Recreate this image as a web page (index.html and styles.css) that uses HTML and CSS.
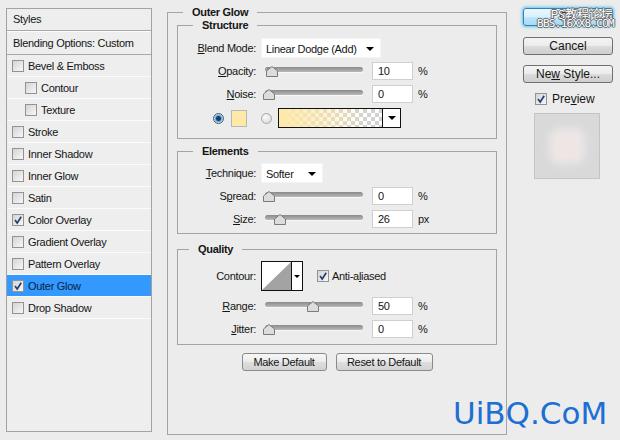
FILE: index.html
```html
<!DOCTYPE html>
<html>
<head>
<meta charset="utf-8">
<link rel="stylesheet" href="styles.css">
</head>
<body>
<div class="dialog">
  <aside class="styles-panel">
    <div class="sp-header">Styles</div>
    <div class="sp-blend">Blending Options: Custom</div>
    <ul class="sp-list">
      <li><span class="cb"></span>Bevel &amp; Emboss</li>
      <li class="sub"><span class="cb"></span>Contour</li>
      <li class="sub"><span class="cb"></span>Texture</li>
      <li><span class="cb"></span>Stroke</li>
      <li><span class="cb"></span>Inner Shadow</li>
      <li><span class="cb"></span>Inner Glow</li>
      <li><span class="cb"></span>Satin</li>
      <li><span class="cb"><svg viewBox="0 0 10 10" width="10" height="10"><path d="M2 5 L4.2 8 L8.2 1.8" fill="none" stroke="#24406e" stroke-width="1.7"/></svg></span>Color Overlay</li>
      <li><span class="cb"></span>Gradient Overlay</li>
      <li><span class="cb"></span>Pattern Overlay</li>
      <li class="active"><span class="cb"><svg viewBox="0 0 10 10" width="10" height="10"><path d="M2 5 L4.2 8 L8.2 1.8" fill="none" stroke="#24406e" stroke-width="1.7"/></svg></span>Outer Glow</li>
      <li><span class="cb"></span>Drop Shadow</li>
    </ul>
  </aside>

  <fieldset class="main">
    <legend>Outer Glow</legend>

    <fieldset class="group structure">
      <legend>Structure</legend>
      <div class="row first">
        <span class="lbl"><u>B</u>lend Mode:</span>
        <div class="select blend">Linear Dodge (Add)<span class="arrow"></span></div>
      </div>
      <div class="row">
        <span class="lbl"><u>O</u>pacity:</span>
        <div class="slider"><div class="track"></div><svg class="thumb" style="left:5px" viewBox="0 0 12 11" width="12" height="11"><path d="M6 0.5 L11.5 5 L11.5 10.5 L0.5 10.5 L0.5 5 Z" fill="#dcdcdc" stroke="#7a7a7a"/></svg></div>
        <div class="num">10</div><span class="unit">%</span>
      </div>
      <div class="row">
        <span class="lbl"><u>N</u>oise:</span>
        <div class="slider"><div class="track"></div><svg class="thumb" style="left:2px" viewBox="0 0 12 11" width="12" height="11"><path d="M6 0.5 L11.5 5 L11.5 10.5 L0.5 10.5 L0.5 5 Z" fill="#dcdcdc" stroke="#7a7a7a"/></svg></div>
        <div class="num">0</div><span class="unit">%</span>
      </div>
      <div class="row colors">
        <span class="radio on"></span>
        <span class="swatch"></span>
        <span class="radio"></span>
        <div class="gradient"><span class="grad-fill"></span><span class="grad-arrow"><span class="arrow"></span></span></div>
      </div>
    </fieldset>

    <fieldset class="group elements">
      <legend>Elements</legend>
      <div class="row first">
        <span class="lbl"><u>T</u>echnique:</span>
        <div class="select tech">Softer<span class="arrow"></span></div>
      </div>
      <div class="row">
        <span class="lbl">S<u>p</u>read:</span>
        <div class="slider"><div class="track"></div><svg class="thumb" style="left:2px" viewBox="0 0 12 11" width="12" height="11"><path d="M6 0.5 L11.5 5 L11.5 10.5 L0.5 10.5 L0.5 5 Z" fill="#dcdcdc" stroke="#7a7a7a"/></svg></div>
        <div class="num">0</div><span class="unit">%</span>
      </div>
      <div class="row">
        <span class="lbl"><u>S</u>ize:</span>
        <div class="slider"><div class="track"></div><svg class="thumb" style="left:13px" viewBox="0 0 12 11" width="12" height="11"><path d="M6 0.5 L11.5 5 L11.5 10.5 L0.5 10.5 L0.5 5 Z" fill="#dcdcdc" stroke="#7a7a7a"/></svg></div>
        <div class="num">26</div><span class="unit">px</span>
      </div>
    </fieldset>

    <fieldset class="group quality">
      <legend>Quality</legend>
      <div class="row contour-row">
        <span class="lbl">Contour:</span>
        <div class="contour">
          <svg class="curve" viewBox="0 0 29 28" width="29" height="28"><rect width="29" height="28" fill="#fff"/><polygon points="0,28 29,0 29,28" fill="#a3a3a3"/></svg>
          <span class="c-arrow"><span class="arrow small"></span></span>
        </div>
        <span class="cb aa"><svg viewBox="0 0 10 10" width="10" height="10"><path d="M2 5 L4.2 8 L8.2 1.8" fill="none" stroke="#24406e" stroke-width="1.7"/></svg></span>
        <span class="aa-label">Anti-a<u>l</u>iased</span>
      </div>
      <div class="row">
        <span class="lbl"><u>R</u>ange:</span>
        <div class="slider"><div class="track"></div><svg class="thumb" style="left:46px" viewBox="0 0 12 11" width="12" height="11"><path d="M6 0.5 L11.5 5 L11.5 10.5 L0.5 10.5 L0.5 5 Z" fill="#dcdcdc" stroke="#7a7a7a"/></svg></div>
        <div class="num">50</div><span class="unit">%</span>
      </div>
      <div class="row">
        <span class="lbl"><u>J</u>itter:</span>
        <div class="slider"><div class="track"></div><svg class="thumb" style="left:2px" viewBox="0 0 12 11" width="12" height="11"><path d="M6 0.5 L11.5 5 L11.5 10.5 L0.5 10.5 L0.5 5 Z" fill="#dcdcdc" stroke="#7a7a7a"/></svg></div>
        <div class="num">0</div><span class="unit">%</span>
      </div>
    </fieldset>

    <div class="defaults">
      <span class="pbtn make">Make Default</span>
      <span class="pbtn reset">Reset to Default</span>
    </div>
  </fieldset>

  <div class="side">
    <div class="btn ok">OK
      <span class="wm1">PS教程论坛</span>
      <span class="wm2">BBS.16XX8.COM</span>
    </div>
    <div class="btn cancel">Cancel</div>
    <div class="btn newstyle">Ne<u>w</u> Style...</div>
    <div class="preview-row"><span class="cb"><svg viewBox="0 0 10 10" width="10" height="10"><path d="M2 5 L4.2 8 L8.2 1.8" fill="none" stroke="#24406e" stroke-width="1.7"/></svg></span>Pre<u>v</u>iew</div>
    <div class="preview"><div class="glow"></div></div>
  </div>
</div>
<div class="watermark">UiBQ.CoM</div>
</body>
</html>
```
FILE: styles.css
```css
* { box-sizing: border-box; }
html, body { margin: 0; padding: 0; }
body {
  width: 620px;
  height: 440px;
  background: #ececec;
  font-family: "Liberation Sans", Arial, sans-serif;
  font-size: 11px;
  letter-spacing: -0.3px;
  color: #151515;
  position: relative;
  overflow: hidden;
}
u { text-decoration: underline; text-underline-offset: 1px; }

.dialog { display: flex; align-items: flex-start; }

/* ---------- styles list ---------- */
.styles-panel {
  margin: 8px 0 0 6px;
  width: 146px;
  height: 424px;
  border: 1px solid #a2a2a2;
  background: #eeeeee;
}
.sp-header {
  height: 22px;
  line-height: 21px;
  padding-left: 6px;
  border-bottom: 1px solid #a8a8a8;
}
.sp-blend {
  height: 24px;
  line-height: 22px;
  padding-left: 6px;
  border-top: 1px solid #fdfdfd;
  border-bottom: 1px solid #a8a8a8;
}
.sp-list { list-style: none; margin: 0; padding: 0; }
.sp-list li {
  height: 22px;
  display: flex;
  align-items: center;
  padding-left: 5px;
  border-bottom: 1px solid #fbfbfb;
}
.sp-list li.sub { padding-left: 18px; }
.sp-list li.active { background: #3399ff; color: #0c1f3c; }

.cb {
  flex: none;
  width: 12px;
  height: 12px;
  margin-right: 4px;
  border: 1px solid #939393;
  background: linear-gradient(135deg, #d4d4d4, #f7f7f7);
  display: inline-flex;
  align-items: center;
  justify-content: center;
}
.cb svg { display: block; }

/* ---------- main panel ---------- */
fieldset { margin: 0; min-width: 0; }
.main {
  margin: 6px 0 0 15px;
  width: 340px;
  height: 429px;
  border: 1px solid #a4a4a4;
  padding: 0 9px;
}
legend { font-weight: bold; padding: 0 9px; }
.main > legend { margin-left: 6px; line-height: 12px; }
.group { border: 1px solid #a4a4a4; padding: 0; }
.group > legend { margin-left: 15px; line-height: 14px; }

.structure { padding-bottom: 8px; }
.elements { margin-top: 5px; padding-bottom: 2px; }
.quality { margin-top: 8px; padding-bottom: 3px; }
.quality > legend { margin-left: 11px; }

.row {
  display: flex;
  align-items: center;
  height: 22px;
  margin-bottom: 1px;
}
.structure .row.first { margin-top: 5px; }
.elements .row.first { margin-top: 4px; }
.row.colors { margin-top: 2px; padding-left: 35px; }
.row.contour-row { margin-top: 3px; height: 34px; margin-bottom: 2px; }

.lbl {
  flex: none;
  width: 83px;
  padding-right: 5px;
  text-align: right;
}

.select {
  position: relative;
  height: 20px;
  line-height: 20px;
  background: #fff;
  padding-left: 4px;
  border: 1px solid #f4f4f4;
}
.select.blend { width: 120px; }
.select.tech { width: 62px; }
.select .arrow { position: absolute; right: 6px; top: 8px; }
.arrow {
  display: block;
  width: 0;
  height: 0;
  border-left: 4px solid transparent;
  border-right: 4px solid transparent;
  border-top: 4px solid #000;
}
.arrow.small {
  border-left-width: 3px;
  border-right-width: 3px;
  border-top-width: 3px;
}

.slider {
  position: relative;
  flex: none;
  width: 102px;
  height: 16px;
}
.track {
  margin: 4px 0 0 4px;
  width: 98px;
  height: 5px;
  border-radius: 3px;
  background: linear-gradient(#8a8a8a, #b9b9b9);
  box-shadow: 0 1px 0 #f8f8f8;
}
.thumb { position: absolute; top: 3px; display: block; }

.num {
  flex: none;
  margin-left: 9px;
  width: 41px;
  height: 18px;
  line-height: 16px;
  background: #fff;
  border: 1px solid #cfcfcf;
  padding-left: 5px;
}
.unit { margin-left: 5px; }

.radio {
  flex: none;
  width: 11px;
  height: 11px;
  border-radius: 50%;
  border: 1px solid #a6a6a6;
  background: radial-gradient(circle at 40% 35%, #fafafa, #d6d6d6);
}
.radio.on {
  border-color: #3f5f7f;
  background: radial-gradient(circle, #1a3e63 0 2px, #6fa7d4 3px, #e4f1fb 5px);
}
.swatch {
  flex: none;
  margin-left: 7px;
  width: 16px;
  height: 17px;
  background: #ffe9a8;
  border: 1px solid #b8b8b8;
}
.colors .radio + .swatch + .radio { margin-left: 14px; }
.gradient {
  flex: none;
  margin-left: 6px;
  width: 123px;
  height: 20px;
  border: 1px solid #111;
  display: flex;
}
.grad-fill {
  flex: 1;
  background:
    linear-gradient(to right, rgba(255,233,168,1) 0%, rgba(255,233,168,0.6) 40%, rgba(255,233,168,0) 85%),
    repeating-conic-gradient(#d2d2d2 0 25%, #ffffff 0 50%) 0 0 / 8px 8px;
}
.grad-arrow {
  flex: none;
  width: 18px;
  border-left: 1px solid #111;
  background: #fff;
  display: flex;
  align-items: center;
  justify-content: center;
}

.contour {
  flex: none;
  display: flex;
  width: 42px;
  height: 30px;
  border: 1px solid #111;
  background: #fff;
}
.curve { display: block; }
.c-arrow {
  flex: none;
  width: 11px;
  border-left: 1px solid #111;
  display: flex;
  align-items: center;
  justify-content: center;
}
.cb.aa { margin-left: 14px; margin-right: 3px; }

.defaults {
  margin-top: 8px;
  display: flex;
  justify-content: center;
  gap: 9px;
}
.pbtn {
  height: 18px;
  line-height: 16px;
  text-align: center;
  border: 1px solid #8a8a8a;
  border-radius: 3px;
  background: linear-gradient(#f6f6f6 0%, #ececec 50%, #dedede 51%, #d2d2d2 100%);
}
.pbtn.make { width: 85px; }
.pbtn.reset { width: 97px; }

/* ---------- right side ---------- */
.side {
  margin: 8px 0 0 16px;
  width: 90px;
  display: flex;
  flex-direction: column;
  font-size: 12px;
  letter-spacing: 0;
}
.btn {
  height: 18px;
  line-height: 16px;
  text-align: center;
  border: 1px solid #707070;
  border-radius: 3px;
  background: linear-gradient(#f4f4f4 0%, #ebebeb 50%, #dcdcdc 51%, #cfcfcf 100%);
}
.btn.ok {
  position: relative;
  border-color: #3c7fb1;
  background: linear-gradient(#eaf6fd 0%, #d9f0fc 50%, #bee6fd 51%, #a7d9f5 100%);
  box-shadow: 0 0 3px 1px #55c6f5;
}
.wm1, .wm2 {
  position: absolute;
  color: #fff;
  white-space: nowrap;
  text-shadow: 1px 0 0 #6a6a6a, -1px 0 0 #6a6a6a, 0 1px 0 #6a6a6a, 0 -1px 0 #6a6a6a;
}
.wm1 {
  right: -1px;
  top: -2px;
  font-family: "Noto Sans CJK SC", sans-serif;
  font-size: 12px;
  line-height: 13px;
}
.wm2 {
  left: 13px;
  top: 10px;
  font-family: "DejaVu Sans Mono", monospace;
  font-size: 11px;
  line-height: 10px;
  letter-spacing: -0.7px;
}
.btn.cancel { margin-top: 11px; }
.btn.newstyle { margin-top: 10px; }
.preview-row {
  margin: 10px 0 0 12px;
  height: 12px;
  display: flex;
  align-items: center;
}
.preview-row .cb { margin-right: 5px; }
.preview {
  margin: 8px 0 0 11px;
  width: 66px;
  height: 66px;
  border: 1px solid #c4c4c4;
  background: #d9d9d9;
  display: flex;
  align-items: center;
  justify-content: center;
}
.glow {
  width: 24px;
  height: 24px;
  border-radius: 4px;
  background: #efe5e5;
  box-shadow: 0 0 8px 6px #ebe7e7;
}

.watermark {
  position: absolute;
  left: 453px;
  top: 395px;
  font-family: "DejaVu Sans", sans-serif;
  font-size: 31px;
  letter-spacing: 0;
  color: #1c6fd3;
}
```
